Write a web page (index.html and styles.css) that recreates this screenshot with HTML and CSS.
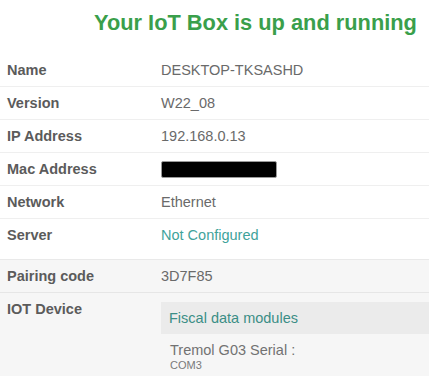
FILE: index.html
```html
<!DOCTYPE html>
<html>
<head>
<meta charset="utf-8">
<link rel="stylesheet" href="styles.css">
</head>
<body>
<h1 class="title">Your IoT Box is up and running</h1>
<div class="info">
  <div class="row"><div class="label">Name</div><div class="value">DESKTOP-TKSASHD</div></div>
  <div class="row"><div class="label">Version</div><div class="value">W22_08</div></div>
  <div class="row"><div class="label">IP Address</div><div class="value">192.168.0.13</div></div>
  <div class="row"><div class="label">Mac Address</div><div class="value"><span class="redact"></span></div></div>
  <div class="row"><div class="label">Network</div><div class="value">Ethernet</div></div>
  <div class="row last"><div class="label">Server</div><div class="value link">Not Configured</div></div>
</div>
<div class="info lower">
  <div class="row"><div class="label">Pairing code</div><div class="value">3D7F85</div></div>
  <div class="row device"><div class="label">IOT Device</div>
    <div class="value">
      <div class="dev-head">Fiscal data modules</div>
      <div class="dev-body">
        <div class="dev-name">Tremol G03 Serial :</div>
        <div class="dev-port">COM3</div>
      </div>
    </div>
  </div>
</div>
</body>
</html>
```
FILE: styles.css
```css
html, body {
  margin: 0;
  padding: 0;
  background: #ffffff;
  font-family: "Liberation Sans", Arial, sans-serif;
  overflow: hidden;
}
.title {
  margin: 0;
  padding: 10px 0 0 94px;
  font-size: 21.8px;
  line-height: 26px;
  font-weight: bold;
  color: #3a9f4b;
  white-space: nowrap;
}
.info {
  margin-top: 18px;
  display: flex;
  flex-direction: column;
}
.row {
  display: grid;
  grid-template-columns: 154px 1fr;
  height: 33px;
  align-items: center;
  border-bottom: 1px solid #efefef;
  box-sizing: border-box;
  font-size: 14.5px;
  line-height: 17px;
}
.row.last {
  border-bottom: none;
}
.label {
  padding-left: 7px;
  font-weight: bold;
  color: #5b5b5b;
  white-space: nowrap;
}
.value {
  padding-left: 7px;
  color: #6a6a6a;
  white-space: nowrap;
}
.link {
  color: #3fa39b;
}
.redact {
  display: block;
  width: 114px;
  height: 15px;
  background: #000;
  border: 1px solid #9a9a9a;
  border-radius: 2px;
}
.lower {
  margin-top: 7px;
  background: #f6f6f6;
  border-top: 1px solid #e9e9e9;
}
.lower .row {
  border-bottom: 1px solid #e6e6e6;
  height: 33px;
}
.row.device {
  height: auto;
  align-items: start;
  border-bottom: none;
}
.device .label {
  padding-top: 8px;
}
.device .value {
  padding-left: 0;
  margin-left: 7px;
  padding-top: 9px;
}
.dev-head {
  background: #ebebeb;
  height: 32px;
  display: flex;
  align-items: center;
  padding-left: 8px;
  color: #3b8e86;
  font-size: 14.5px;
}
.dev-body {
  padding: 8px 0 10px 9px;
}
.dev-name {
  color: #727272;
  font-size: 14.5px;
  line-height: 17px;
}
.dev-port {
  color: #7a7a7a;
  font-size: 11px;
  line-height: 13px;
}
```
